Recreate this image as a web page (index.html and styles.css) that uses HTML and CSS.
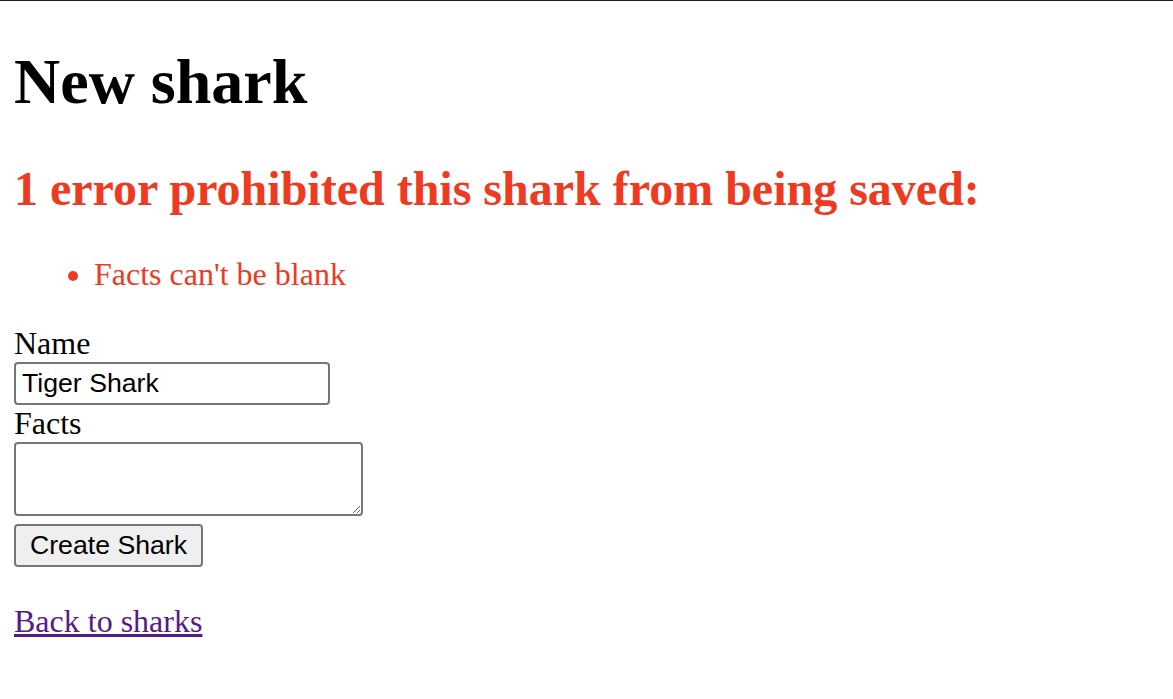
FILE: index.html
```html
<!DOCTYPE html>
<html>
<head>
<meta charset="utf-8">
<title>New shark</title>
<link rel="stylesheet" href="styles.css">
</head>
<body>
<h1 class="title">New shark</h1>
<form class="shark-form">
  <div class="errors">
    <h2 class="errors-title">1 error prohibited this shark from being saved:</h2>
    <ul class="errors-list">
      <li>Facts can't be blank</li>
    </ul>
  </div>
  <div class="field">
    <label class="label" for="name">Name</label>
    <input class="text-input" id="name" type="text" value="Tiger Shark">
  </div>
  <div class="field">
    <label class="label" for="facts">Facts</label>
    <textarea class="text-area" id="facts"></textarea>
  </div>
  <div class="actions">
    <button class="submit" type="button">Create Shark</button>
  </div>
</form>
<a class="back" href="#">Back to sharks</a>
</body>
</html>
```
FILE: styles.css
```css
html {
  border-top: 1px solid #1e1e1e;
}
body {
  margin: 14px;
  font-family: "Liberation Serif", "Times New Roman", serif;
  font-size: 32px;
  color: #000;
  background: #fff;
}
.title {
  font-size: 64px;
  font-weight: bold;
  margin: 29.6px 0 42.6px;
}
.errors {
  color: #ef3a22;
}
.errors-title {
  font-size: 48px;
  font-weight: bold;
  margin: 42.6px 0 32px;
}
.errors-list {
  margin: 40px 0 32px;
  padding-left: 80px;
}
.field {
  display: flex;
  flex-direction: column;
  align-items: flex-start;
}
.label {
  display: block;
}
.text-input {
  box-sizing: border-box;
  width: 316px;
  height: 43px;
  margin: 0;
  padding: 2px 6px;
  font-family: "Liberation Sans", Arial, sans-serif;
  font-size: 26.67px;
  border: 2px solid #767676;
  border-radius: 4px;
  color: #000;
  background: #fff;
}
.text-area {
  box-sizing: border-box;
  width: 349px;
  height: 74px;
  margin: 0;
  padding: 3px;
  font-family: "Liberation Mono", monospace;
  font-size: 26.67px;
  border: 2px solid #767676;
  border-radius: 4px;
  background: #fff;
}
.actions {
  display: flex;
  margin-top: 8px;
}
.submit {
  box-sizing: border-box;
  width: 189px;
  height: 43px;
  padding: 2px 10px;
  font-family: "Liberation Sans", Arial, sans-serif;
  font-size: 26.67px;
  color: #000;
  background: #efefef;
  border: 2px solid #767676;
  border-radius: 4px;
}
.back {
  display: inline-block;
  margin-top: 36px;
  color: #551a8b;
}
```
